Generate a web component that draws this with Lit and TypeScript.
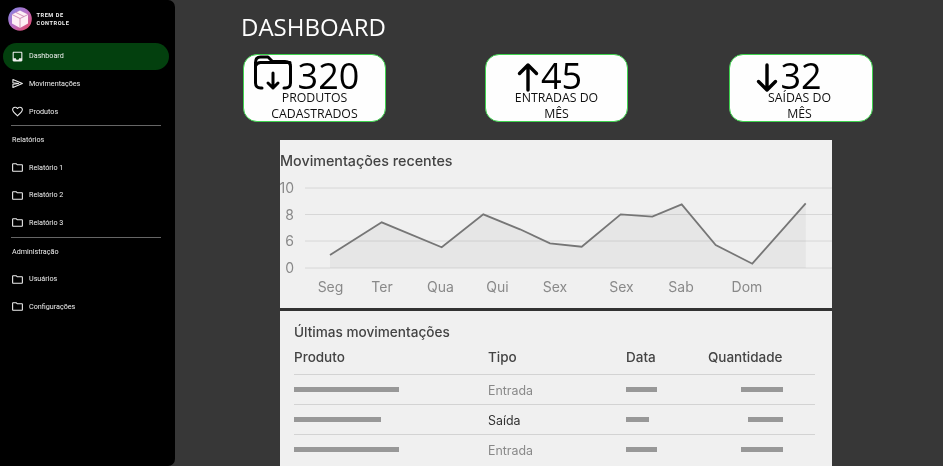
import { LitElement, html, css, svg } from "lit";
import { customElement } from "lit/decorators.js";

const I = {
  inbox: "M19 3H5c-1.1 0-2 .9-2 2v14c0 1.1.9 2 2 2h14c1.1 0 2-.9 2-2V5c0-1.1-.9-2-2-2zm0 12h-4c0 1.66-1.35 3-3 3s-3-1.34-3-3H5V5h14v10z",
  heart: "M16.5 3c-1.74 0-3.41.81-4.5 2.09C10.91 3.81 9.24 3 7.5 3 4.42 3 2 5.42 2 8.5c0 3.78 3.4 6.86 8.55 11.54L12 21.35l1.45-1.32C18.6 15.36 22 12.28 22 8.5 22 5.42 19.58 3 16.5 3zm-4.4 15.55-.1.1-.1-.1C7.14 14.24 4 11.39 4 8.5 4 6.5 5.5 5 7.5 5c1.54 0 3.04.99 3.57 2.36h1.87C13.46 5.99 14.96 5 16.5 5c2 0 3.5 1.5 3.5 3.5 0 2.89-3.14 5.74-7.9 10.05z",
  folder: "M9.17 6l2 2H20v10H4V6h5.17M10 4H4c-1.1 0-1.99.9-1.99 2L2 18c0 1.1.9 2 2 2h16c1.1 0 2-.9 2-2V8c0-1.1-.9-2-2-2h-8l-2-2z",
};

const navIcon = (d: string) => html`<svg class="nav-icon" viewBox="0 0 24 24"><path d=${d} fill="currentColor" fill-rule="evenodd"></path></svg>`;
const sendIcon = html`<svg class="nav-icon" viewBox="0 0 24 24"><path d="M3.500 4.500 21 12 3.500 19.500v-6L14 12 3.500 10.500z" fill="none" stroke="currentColor" stroke-width="1.900" stroke-linejoin="round"></path></svg>`;

const points: [number, number][] = [
  [330, 255], [381.7, 222.3], [441.7, 247.3], [483.3, 214.3], [520, 229.3], [550, 243.3],
  [581.7, 246.7], [620.7, 214.3], [652.3, 216.7], [681.7, 204.3], [715.7, 245], [752.3, 263.7], [805.7, 203.3],
];

@customElement("app-root")
export class AppRoot extends LitElement {
  static styles = css`
    :host { display: block; width: 943px; height: 466px; overflow: hidden; background: #373737; }
    .app { display: flex; height: 466px; overflow: hidden; }
    .side { flex: 0 0 175px; background: #000; border-radius: 0 7px 7px 0; color: #eee; font: 400 7.2px/12px Roboto, sans-serif; filter: blur(.25px); }
    .brand { display: flex; align-items: center; gap: 5px; height: 42.6px; padding: 0 0 5px 7.5px; box-sizing: border-box; }
    .logo { width: 24px; height: 24px; display: block; }
    .brand-name { font: 700 5.6px/8px Roboto, sans-serif; letter-spacing: .55px; color: #f2f2f2; width: 36px; }
    .nav { padding: 0 3px; width: 166px; }
    .item { display: flex; align-items: center; gap: 5px; height: 27.6px; padding-left: 8px; border-radius: 14px; white-space: nowrap; }
    .item.on { background: #03400e; }
    .nav-icon { width: 13px; height: 13px; flex: none; color: #eee; }
    .rule { height: 1px; background: #666; margin: 0 8px; }
    .group { height: 27.6px; padding: 0 9px; display: flex; align-items: center; }

    .main { flex: 1; display: flex; flex-direction: column; padding: 10px 0 0 66px; min-width: 0; color: #000; font-family: "Open Sans", sans-serif; opacity: .999; }
    h1 { margin: 0 0 10px; font: 400 24px/34px "Open Sans", sans-serif; color: #fff; }
    .cards { display: grid; grid-template-columns: 242px 244px 144px; margin-left: 2px; }
    .card { box-sizing: border-box; width: 143px; height: 67.5px; background: #fff; border: 1px solid #3fd44f; border-radius: 14px; display: flex; flex-direction: column; align-items: center; }
    .card.end { width: 144px; }
    .card.end .label { margin-left: -3px; }
    .top { display: flex; align-items: flex-start; height: 35px; flex: none; padding-right: 16px; }
    .top.wide { padding-right: 26px; }
    .num { font: 400 36px/29px "Open Sans", sans-serif; margin-top: 6px; }
    .label { font: 400 12.3px/16px "Open Sans", sans-serif; text-align: center; width: 90px; color: #111; }
    .folder { width: 38px; height: 35px; margin-right: 6px; overflow: visible; }
    .arrow { width: 26px; height: 35px; overflow: visible; }

    .panel { flex: 1; width: 552px; margin: 18.5px 0 0 39px; background: #f1f1f1; font-family: Inter, sans-serif; filter: blur(.35px); }
    .chart { height: 168px; border-bottom: 3px solid #333; }
    .chart svg { display: block; width: 552px; height: 168px; }
    .t-axis { font: 400 14px Inter, sans-serif; fill: #8a8a8a; }
    .t-title { font: 500 14.3px Inter, sans-serif; fill: #444; }

    .table { padding: 12px 17.5px 0 14px; }
    h2 { margin: 0 0 7px; font: 500 13.6px/18px Inter, sans-serif; color: #444; }
    .row { display: grid; grid-template-columns: 194px 138px 1fr 120px; align-items: center; height: 30px; border-top: 1px solid #d4d4d4; box-sizing: border-box; font: 400 12.4px Inter, sans-serif; }
    .row.head { height: 25.5px; border: 0; font-weight: 500; font-size: 13.5px; line-height: 18px; color: #444; align-items: flex-start; }
    .qty { justify-self: end; margin-right: 32px; }
    .bar { display: block; height: 5px; background: #999; }
    .in { color: #8a8a8a; padding-top: 2px; }
    .out { color: #333; padding-top: 2px; }
  `;

  private item(label: string, d: string, on = false) {
    return html`<div class="item ${on ? "on" : ""}">${navIcon(d)}<span>${label}</span></div>`;
  }

  private row(w: number, tipo: string, cls: string, d: number, q: number) {
    return html`<div class="row">
      <span class="bar" style="width:${w}px"></span>
      <span class=${cls}>${tipo}</span>
      <span class="bar" style="width:${d}px"></span>
      <span class="bar qty" style="width:${q}px"></span>
    </div>`;
  }

  private chart() {
    const line = points.map((p) => `${p[0] - 280},${p[1] - 140}`).join(" ");
    const first = points[0][0] - 280;
    const last = points[points.length - 1][0] - 280;
    const grid = [48, 74.5, 101, 128];
    const ys: [string, number][] = [["10", 53], ["8", 79.5], ["6", 106], ["0", 133]];
    const xs: [string, number][] = [["Seg", 50.5], ["Ter", 102], ["Qua", 160.5], ["Qui", 217.5], ["Sex", 275], ["Sex", 341.5], ["Sab", 401], ["Dom", 467]];
    return html`<svg viewBox="0 0 552 168">
      <text class="t-title" x="0" y="26">Movimentações recentes</text>
      ${grid.map((y) => svg`<line x1="25" x2="552" y1=${y} y2=${y} stroke="#d8d8d8" stroke-width="1"></line>`)}
      <polygon points="${first},128 ${line} ${last},128" fill="#8a8a8a" fill-opacity=".09"></polygon>
      <polyline points=${line} fill="none" stroke="#777" stroke-width="1.8"></polyline>
      ${ys.map(([t, y]) => svg`<text class="t-axis" x="14" y=${y} text-anchor="end">${t}</text>`)}
      ${xs.map(([t, x]) => svg`<text class="t-axis" x=${x} y="152" text-anchor="middle">${t}</text>`)}
    </svg>`;
  }

  render() {
    return html`<div class="app">
      <aside class="side">
        <div class="brand">
          <svg class="logo" viewBox="0 0 24 24">
            <defs><linearGradient id="lg" x1="0" y1="0" x2="1" y2="1"><stop offset="0" stop-color="#7d86e6"></stop><stop offset=".5" stop-color="#b86fc4"></stop><stop offset="1" stop-color="#ea3f55"></stop></linearGradient></defs>
            <circle cx="12" cy="12" r="11.8" fill="url(#lg)"></circle>
            <path d="M12 3.500 20 7.500v9l-8 4.500-8-4.500v-9z" fill="#fdeef5"></path>
            <path d="M4 7.500l8 4 8-4M12 11.500V21M8 5.500l8 4" fill="none" stroke="#c77aa8" stroke-width=".8"></path>
          </svg>
          <div class="brand-name">TREM DE CONTROLE</div>
        </div>
        <nav class="nav">
          ${this.item("Dashboard", I.inbox, true)}
          <div class="item">${sendIcon}<span>Movimentações</span></div>
          ${this.item("Produtos", I.heart)}
          <div class="rule"></div>
          <div class="group">Relatórios</div>
          ${this.item("Relatório 1", I.folder)}
          ${this.item("Relatório 2", I.folder)}
          ${this.item("Relatório 3", I.folder)}
          <div class="rule"></div>
          <div class="group">Administração</div>
          ${this.item("Usuários", I.folder)}
          ${this.item("Configurações", I.folder)}
        </nav>
      </aside>
      <main class="main">
        <h1>DASHBOARD</h1>
        <div class="cards">
          <div class="card">
            <div class="top">
              <svg class="folder" viewBox="0 0 38 35" fill="none" stroke="#000" stroke-width="3" stroke-linecap="round" stroke-linejoin="round">
                <path d="M8 33H6.500C3.500 33 1.500 31 1.500 28V7.500C1.500 4 3.500 2 6.500 2H14l4.500 4.500H31c3.500 0 5.500 2 5.500 5V28c0 3-2 5-5 5H30"></path>
                <path d="M1.500 11c1-2.500 3-3.500 5-3.500H36"></path>
                <path d="M19 18v15M14 28l5 5 5-5"></path>
              </svg>
              <span class="num">320</span>
            </div>
            <div class="label">PRODUTOS CADASTRADOS</div>
          </div>
          <div class="card">
            <div class="top">
              <svg class="arrow" viewBox="0 0 26 35" fill="none" stroke="#000" stroke-width="3.400" stroke-linecap="round" stroke-linejoin="round"><path d="M13 35V10M4.500 18.500 13 10l8.500 8.500"></path></svg>
              <span class="num">45</span>
            </div>
            <div class="label">ENTRADAS DO MÊS</div>
          </div>
          <div class="card end">
            <div class="top wide">
              <svg class="arrow" viewBox="0 0 26 35" fill="none" stroke="#000" stroke-width="3.400" stroke-linecap="round" stroke-linejoin="round"><path d="M13 10v25M4.500 26.500 13 35l8.500-8.500"></path></svg>
              <span class="num">32</span>
            </div>
            <div class="label">SAÍDAS DO MÊS</div>
          </div>
        </div>
        <section class="panel">
          <div class="chart">${this.chart()}</div>
          <div class="table">
            <h2>Últimas movimentações</h2>
            <div class="row head"><span>Produto</span><span>Tipo</span><span>Data</span><span class="qty">Quantidade</span></div>
            ${this.row(105, "Entrada", "in", 31, 42)}
            ${this.row(87, "Saída", "out", 23, 35)}
            ${this.row(105, "Entrada", "in", 31, 42)}
          </div>
        </section>
      </main>
    </div>`;
  }
}
